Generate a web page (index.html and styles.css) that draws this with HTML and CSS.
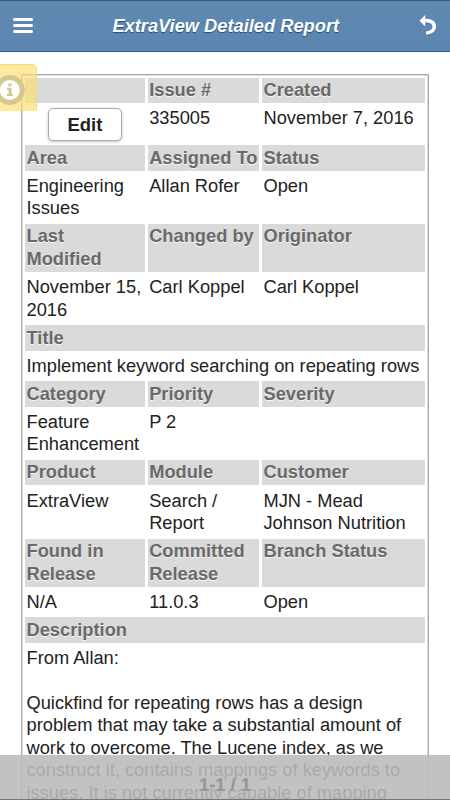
FILE: index.html
```
<!DOCTYPE html>
<html lang="en">
<head>
<meta charset="utf-8">
<title>ExtraView Detailed Report</title>
<link rel="stylesheet" href="styles.css">
</head>
<body>
<header class="bar">
  <svg class="menu" viewBox="0 0 20 15"><path d="M1.500 1.500h17M1.500 7.500h17M1.500 13.500h17" stroke="#fff" stroke-width="3" stroke-linecap="round"/></svg>
  <h1>ExtraView Detailed Report</h1>
  <svg class="back" viewBox="0 0 18 20"><path d="M0.500 5.700 6.200 0v3.800C13 3.600 17 6.500 17 11.300c0 5-4 8-10 8.300v-3.200c3.700-.4 6.500-2 6.500-4.900 0-2.800-2.700-4.100-7.300-4.200v4.200z" fill="#fff"/></svg>
</header>
<main class="report">
  <div class="h"></div><div class="h">Issue #</div><div class="h">Created</div>
  <div class="v action"><button>Edit</button></div><div class="v">335005</div><div class="v">November 7, 2016</div>
  <div class="h">Area</div><div class="h">Assigned To</div><div class="h">Status</div>
  <div class="v">Engineering<br>Issues</div><div class="v">Allan Rofer</div><div class="v">Open</div>
  <div class="h">Last<br>Modified</div><div class="h">Changed by</div><div class="h">Originator</div>
  <div class="v">November 15,<br>2016</div><div class="v">Carl Koppel</div><div class="v">Carl Koppel</div>
  <div class="h wide">Title</div>
  <div class="v wide">Implement keyword searching on repeating rows</div>
  <div class="h">Category</div><div class="h">Priority</div><div class="h">Severity</div>
  <div class="v">Feature<br>Enhancement</div><div class="v">P 2</div><div class="v"></div>
  <div class="h">Product</div><div class="h">Module</div><div class="h">Customer</div>
  <div class="v">ExtraView</div><div class="v">Search /<br>Report</div><div class="v">MJN - Mead<br>Johnson Nutrition</div>
  <div class="h">Found in<br>Release</div><div class="h">Committed<br>Release</div><div class="h">Branch Status</div>
  <div class="v">N/A</div><div class="v">11.0.3</div><div class="v">Open</div>
  <div class="h wide">Description</div>
  <div class="v wide">From Allan:<br><br>Quickfind for repeating rows has a design<br>problem that may take a substantial amount of<br>work to overcome. The Lucene index, as we<br>construct it, contains mappings of keywords to<br>issues. It is not currently capable of mapping</div>
</main>
<div class="info">
  <svg viewBox="0 0 37 47"><circle cx="9.800" cy="26" r="15" fill="#d4c78f"/><circle cx="9.800" cy="26" r="10" fill="#fff"/><path d="M8.300 19.500h3.200v2.700H8.300zM7 23.800h4.500v6.200h1.300v2H7v-2h1.500v-4.200H7z" fill="#d3c891"/></svg>
</div>
<footer class="pager"><span>1-1 / 1</span></footer>
</body>
</html>
```
FILE: styles.css
```
* { box-sizing: border-box; }
body {
  margin: 0;
  height: 800px;
  overflow: hidden;
  background: #fff;
  color: #222;
  font: 18.270px/22.500px "Liberation Sans", Arial, sans-serif;
}
.bar {
  height: 52px;
  padding: 0 13px 0 12.500px;
  display: flex;
  align-items: center;
  justify-content: space-between;
  background: linear-gradient(#6089b2, #5c86af);
  border-top: 1px solid #38587a;
  border-bottom: 1px solid #396590;
}
.bar h1 {
  margin: 0;
  font-size: 18.270px;
  font-style: italic;
  color: #fff;
  text-shadow: 0 1px 1px #17507f;
  white-space: nowrap;
}
.menu { width: 20px; height: 15px; margin-top: -2px; }
.back { width: 18px; height: 20px; margin-top: -2px; }
.report {
  width: 408px;
  height: 760px;
  margin: 22px 0 0 21px;
  padding: 2.900px;
  display: grid;
  grid-template-columns: 119.700px 111.300px 162.800px;
  align-content: start;
  gap: 2.810px 3px;
  border: 1.400px solid #a8a8a8;
  box-shadow: inset 0 0 0 1px #ddd;
}
.h, .v {
  min-height: 25.310px;
  padding: 1.400px 0 1.400px 1.600px;
  white-space: nowrap;
}
.h {
  background: #dadada;
  color: #696969;
  font-weight: bold;
  text-shadow: 0 1px 0 #f5f5f5;
}
.wide { grid-column: 1 / -1; }
.action { height: 36.600px; padding: 2px 0 0 23px; }
button {
  display: block;
  width: 74px;
  height: 33px;
  padding: 2px 0 0;
  border: 1px solid #aaa;
  border-radius: 5px;
  background: #fff;
  box-shadow: 0 1px 3px rgba(0, 0, 0, .25);
  color: #222;
  font: bold 18.500px "Liberation Sans", Arial, sans-serif;
}
.info {
  position: absolute;
  left: 0;
  top: 64px;
  width: 37px;
  height: 47px;
  border: 1px solid rgba(250, 212, 120, .8);
  border-width: 1px 1px 0 0;
  border-radius: 0 5px 0 0;
  background: rgba(252, 224, 110, .67);
}
.info svg { display: block; width: 37px; height: 47px; margin-top: -1px; }
.pager {
  position: absolute;
  left: 0;
  bottom: 0;
  width: 450px;
  height: 45px;
  padding-top: 19px;
  background: rgba(187, 187, 187, .89);
  border-bottom: 1px solid #777;
  color: #969696;
  font-weight: bold;
  text-align: center;
  text-shadow: 0 1px 0 #bbb;
}
```
